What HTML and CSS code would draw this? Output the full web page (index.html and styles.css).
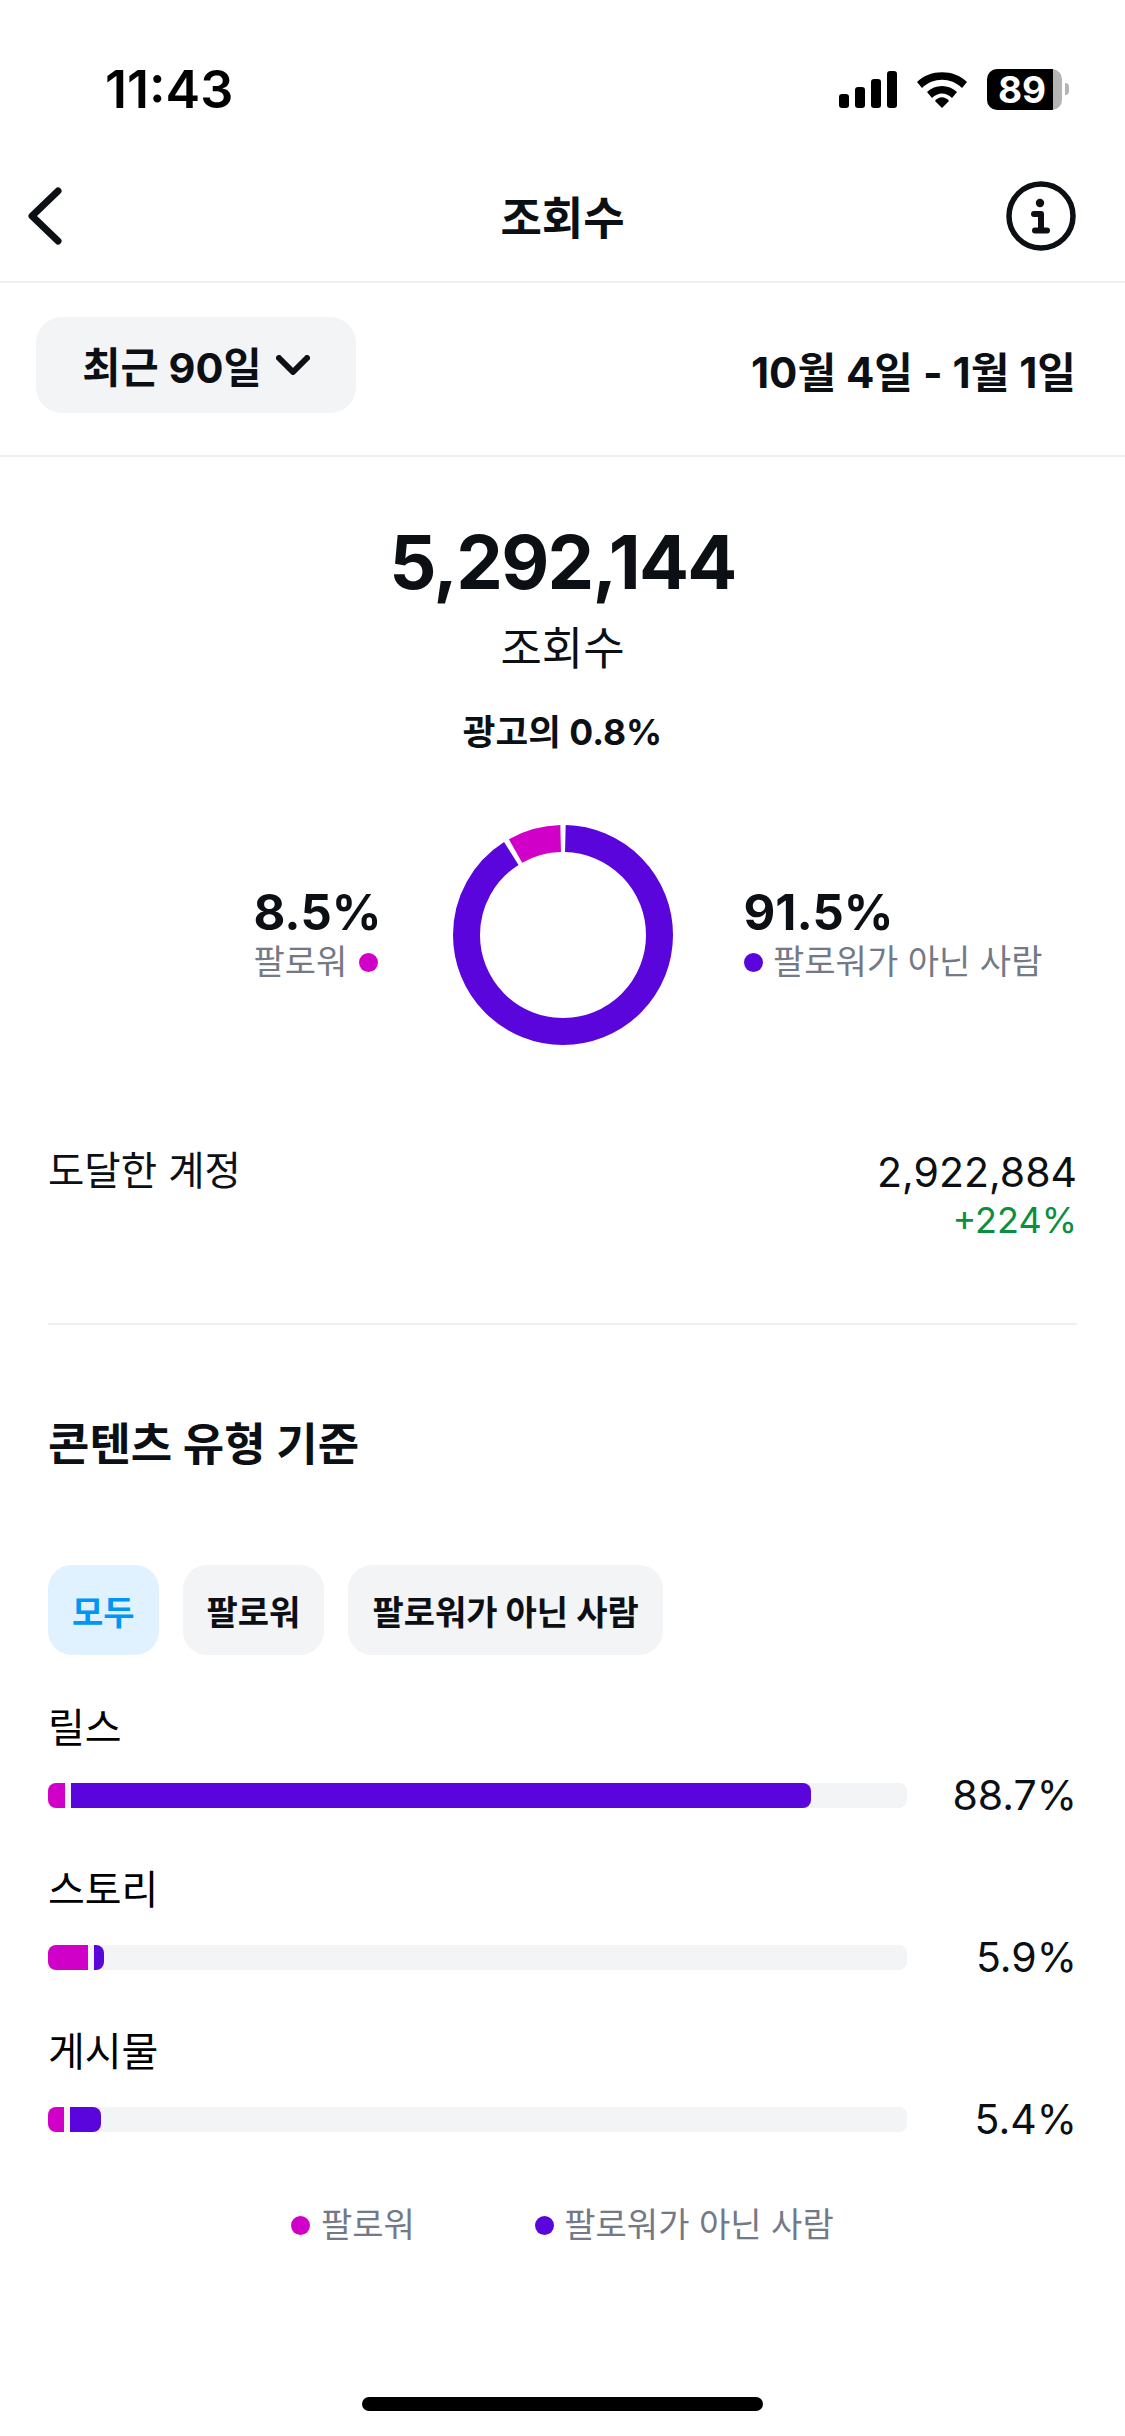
FILE: index.html
```html
<!DOCTYPE html>
<html lang="ko">
<head>
  <meta charset="UTF-8" />
  <meta name="viewport" content="width=device-width, initial-scale=1.0" />
  <title>조회수</title>
  <link rel="stylesheet" href="styles.css">
</head>
<body>
  <div class="page">
    <div class="status-bar">
      <span class="time">11:43</span>
      <div class="status-icons">
        <svg width="58" height="37" viewBox="0 0 58 37"><rect x="0" y="23" width="10" height="14" rx="3"/><rect x="16" y="16" width="10" height="21" rx="3"/><rect x="32" y="8" width="10" height="29" rx="3"/><rect x="48" y="0" width="10" height="37" rx="3"/></svg>
        <svg width="52" height="38" viewBox="0 0 52 38"><path d="M1 12 C14 -1 38 -1 51 12 L46 18 C35 7 17 7 6 18 Z"/><path d="M11 22 C19 14 33 14 41 22 L36 28 C30 22 22 22 16 28 Z"/><path d="M19 31 C23 26 29 26 33 31 L26 38 Z"/></svg>
        <div class="battery">
          <div class="battery-body"><span class="battery-num">89</span></div>
          <div class="battery-cap"></div>
        </div>
      </div>
    </div>

    <header class="nav">
      <svg class="nav-back" width="36" height="60" viewBox="0 0 36 60"><path d="M32 5 L6 30 L32 55" fill="none" stroke="#0c1014" stroke-width="7" stroke-linecap="round" stroke-linejoin="round"/></svg>
      <h1 class="nav-title">조회수</h1>
      <svg class="nav-info" width="70" height="70" viewBox="0 0 70 70"><circle cx="35" cy="35" r="32" fill="none" stroke="#0c1014" stroke-width="5.5"/><circle cx="34" cy="22" r="4.2" fill="#0c1014"/><path d="M28 33 H35 V49 M29 49.5 H41" fill="none" stroke="#0c1014" stroke-width="6" stroke-linecap="round" stroke-linejoin="round"/></svg>
    </header>

    <div class="filter-row">
      <button class="range-btn">최근 90일
        <svg width="34" height="20" viewBox="0 0 34 20"><path d="M3 3 L17 17 L31 3" fill="none" stroke="#0c1014" stroke-width="6" stroke-linecap="round" stroke-linejoin="round"/></svg>
      </button>
      <span class="date-range">10월 4일 - 1월 1일</span>
    </div>

    <section class="summary">
      <div class="total">5,292,144</div>
      <div class="total-label">조회수</div>
      <div class="ads-share">광고의 0.8%</div>

      <div class="donut-row">
        <div class="donut-side left">
          <div class="share">8.5%</div>
          <div class="share-label">팔로워 <i class="dot pink after"></i></div>
        </div>
        <svg class="donut" width="220" height="220" viewBox="0 0 220 220">
          <g transform="rotate(-90 110 110)" fill="none" stroke-width="27">
            <circle cx="110" cy="110" r="96.5" pathLength="100" stroke="#5905dc" stroke-dasharray="90.6 9.4" stroke-dashoffset="-0.4"/>
            <circle cx="110" cy="110" r="96.5" pathLength="100" stroke="#d100c8" stroke-dasharray="7.8 92.2" stroke-dashoffset="-91.8"/>
          </g>
        </svg>
        <div class="donut-side">
          <div class="share">91.5%</div>
          <div class="share-label"><i class="dot purple"></i> 팔로워가 아닌 사람</div>
        </div>
      </div>
    </section>

    <div class="reach-row">
      <span class="reach-label">도달한 계정</span>
      <div class="reach-values">
        <div class="reach-num">2,922,884</div>
        <div class="reach-change">+224%</div>
      </div>
    </div>

    <section class="breakdown">
      <h2 class="breakdown-title">콘텐츠 유형 기준</h2>
      <div class="tabs">
        <span class="tab active">모두</span>
        <span class="tab">팔로워</span>
        <span class="tab">팔로워가 아닌 사람</span>
      </div>

      <div class="bar-item">
        <div class="bar-label">릴스</div>
        <div class="bar-line">
          <div class="track">
            <div class="seg pink" style="width:17px"></div>
            <div class="seg purple" style="width:740px"></div>
          </div>
          <span class="pct">88.7%</span>
        </div>
      </div>

      <div class="bar-item">
        <div class="bar-label">스토리</div>
        <div class="bar-line">
          <div class="track">
            <div class="seg pink" style="width:40px"></div>
            <div class="seg purple" style="width:10px"></div>
          </div>
          <span class="pct">5.9%</span>
        </div>
      </div>

      <div class="bar-item">
        <div class="bar-label">게시물</div>
        <div class="bar-line">
          <div class="track">
            <div class="seg pink" style="width:16px"></div>
            <div class="seg purple" style="width:31px"></div>
          </div>
          <span class="pct">5.4%</span>
        </div>
      </div>

      <div class="legend">
        <span class="legend-item"><i class="dot pink"></i> 팔로워</span>
        <span class="legend-item"><i class="dot purple"></i> 팔로워가 아닌 사람</span>
      </div>
    </section>

    <div class="home-bar"></div>
  </div>
</body>
</html>
```

FILE: styles.css
```css
* {
  box-sizing: border-box;
}

body {
  margin: 0;
  background: #fff;
  color: #0c1014;
  font-family: Inter, "Noto Sans CJK KR", sans-serif;
}

.page {
  width: 1125px;
  height: 2436px;
  display: flex;
  flex-direction: column;
}

.status-bar {
  height: 150px;
  padding: 28px 56px 0 105px;
  display: flex;
  justify-content: space-between;
  align-items: center;
}

.time {
  font-size: 52px;
  font-weight: 600;
  color: #000;
}

.status-icons {
  display: flex;
  align-items: center;
  gap: 19px;
}

.battery {
  display: flex;
  align-items: center;
  gap: 3px;
}

.battery-body {
  width: 75px;
  height: 41px;
  border-radius: 10px;
  background: linear-gradient(to right, #000 66px, #b5b5b5 66px);
  display: flex;
  align-items: center;
  padding-left: 11px;
}

.battery-num {
  font-size: 37px;
  font-weight: 700;
  color: #fff;
}

.battery-cap {
  width: 4px;
  height: 12px;
  border-radius: 0 4px 4px 0;
  background: #b5b5b5;
}

.nav {
  height: 133px;
  padding: 0 49px;
  border-bottom: 2px solid #eeeff1;
  display: grid;
  grid-template-columns: 1fr auto 1fr;
  align-items: center;
}

.nav-back {
  margin-left: -23px;
}

.nav-info {
  justify-self: end;
}

.nav-title {
  margin: 0;
  font-size: 45px;
  font-weight: 700;
}

.filter-row {
  height: 174px;
  padding: 0 49px 0 36px;
  border-bottom: 2px solid #eeeff1;
  display: flex;
  justify-content: space-between;
  align-items: center;
}

.range-btn {
  width: 320px;
  height: 96px;
  margin-top: -8px;
  border: none;
  border-radius: 26px;
  background: #f3f4f6;
  color: #0c1014;
  font-family: inherit;
  font-size: 41.5px;
  font-weight: 700;
  display: flex;
  justify-content: center;
  align-items: center;
  gap: 14px;
}

.date-range {
  font-size: 42px;
  font-weight: 700;
}

.summary {
  padding-top: 62px;
  display: flex;
  flex-direction: column;
  align-items: center;
}

.total {
  font-size: 74px;
  font-weight: 700;
  line-height: 86px;
  letter-spacing: -1.7px;
}

.total-label {
  margin-top: 14px;
  font-size: 45px;
  line-height: 60px;
}

.ads-share {
  margin-top: 32px;
  font-size: 35.5px;
  font-weight: 700;
  line-height: 44px;
}

.donut-row {
  width: 100%;
  margin-top: 70px;
  display: grid;
  grid-template-columns: 1fr auto 1fr;
  column-gap: 71px;
  align-items: center;
}

.donut-side {
  padding-bottom: 2px;
}

.donut-side.left {
  justify-self: end;
}

.share {
  font-size: 49px;
  font-weight: 700;
  line-height: 56px;
}

.share-label {
  font-size: 34px;
  line-height: 42px;
  color: #737986;
}

.dot {
  display: inline-block;
  width: 19px;
  height: 19px;
  border-radius: 50%;
  margin-right: 1px;
  vertical-align: 2px;
}

.dot.after {
  margin: 0 0 0 2px;
}

.pink {
  background: #d100c8;
}

.purple {
  background: #5905dc;
}

.reach-row {
  margin-top: 100px;
  padding: 0 48px;
  height: 178px;
  display: flex;
  justify-content: space-between;
  font-size: 39.5px;
  line-height: 52px;
}

.reach-values {
  text-align: right;
}

.reach-num {
  font-size: 41px;
  line-height: 54px;
}

.reach-change {
  font-size: 36px;
  line-height: 42px;
  color: #0a8f3e;
}

.breakdown {
  margin: 0 48px;
  border-top: 2px solid #eeeff1;
  padding-top: 90px;
}

.breakdown-title {
  margin: 0;
  font-size: 45px;
  font-weight: 700;
  line-height: 60px;
}

.tabs {
  margin-top: 90px;
  display: flex;
  gap: 24px;
}

.tab {
  height: 90px;
  padding: 0 24px;
  border-radius: 24px;
  background: #f3f4f6;
  font-size: 34px;
  font-weight: 700;
  display: flex;
  align-items: center;
}

.tab.active {
  background: #e0f1ff;
  color: #0095f6;
}

.bar-item {
  height: 162px;
  padding-top: 45px;
}

.bar-label {
  font-size: 40px;
  line-height: 56px;
  color: #000;
}

.bar-line {
  margin-top: 14px;
  display: flex;
  justify-content: space-between;
  align-items: center;
}

.track {
  width: 859px;
  height: 25px;
  border-radius: 8px;
  background: #f3f4f6;
  display: flex;
  gap: 6px;
}

.seg.pink {
  border-radius: 8px 0 0 8px;
}

.seg.purple {
  border-radius: 0 8px 8px 0;
}

.pct {
  font-size: 41px;
}

.legend {
  margin-top: 57px;
  display: flex;
  justify-content: center;
  gap: 120px;
}

.legend-item {
  font-size: 34px;
  color: #737986;
}

.home-bar {
  width: 401px;
  height: 14px;
  margin: auto auto 25px;
  border-radius: 7px;
  background: #000;
}
```
